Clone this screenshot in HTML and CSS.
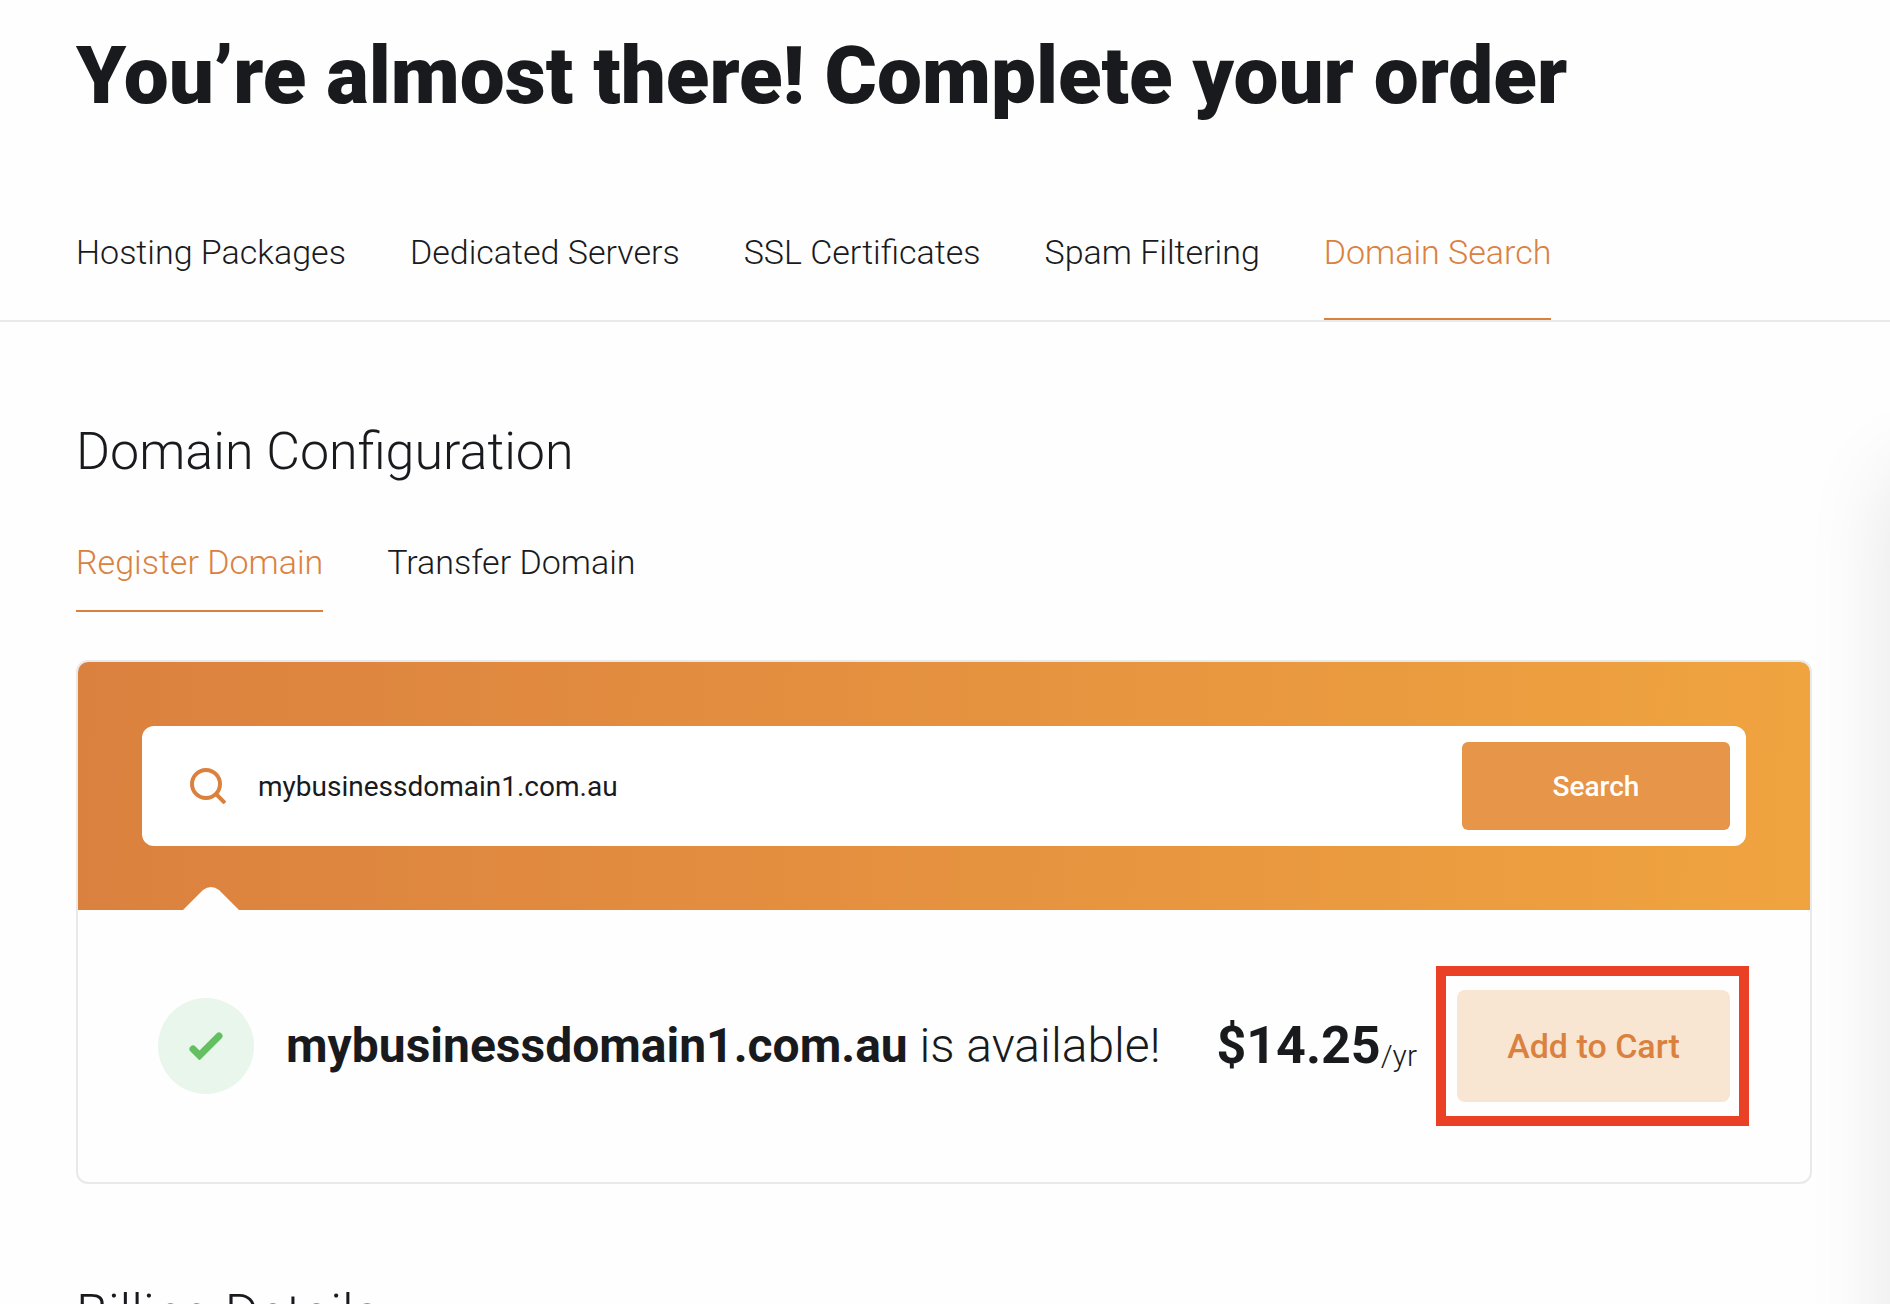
FILE: index.html
```html
<!DOCTYPE html>
<html lang="en">

<head>
    <meta charset="UTF-8">
    <meta name="viewport" content="width=device-width, initial-scale=1.0">
    <title>Complete your order</title>
    <link rel="stylesheet" href="styles.css">
</head>

<body>
    <header class="page-header">
        <h1>You’re almost there! Complete your order</h1>
        <nav class="tabs main-tabs">
            <a href="#hosting">Hosting Packages</a>
            <a href="#servers">Dedicated Servers</a>
            <a href="#ssl">SSL Certificates</a>
            <a href="#spam">Spam Filtering</a>
            <a href="#domain" class="active">Domain Search</a>
        </nav>
    </header>
    <div class="layout">
        <main class="content">
            <section id="domain">
                <h2>Domain Configuration</h2>
                <nav class="tabs sub-tabs">
                    <a href="#register" class="active">Register Domain</a>
                    <a href="#transfer">Transfer Domain</a>
                </nav>
                <div class="domain-card">
                    <div class="search-area">
                        <form class="search-box">
                            <label for="domain-name" aria-label="Domain name">
                                <svg class="search-icon" viewBox="0 0 36 36" width="36" height="36">
                                    <circle cx="16" cy="16" r="14" />
                                    <path d="M26 26l9 9" />
                                </svg>
                            </label>
                            <input type="text" id="domain-name" name="domain" value="mybusinessdomain1.com.au">
                            <button type="submit" class="search-button">Search</button>
                        </form>
                        <!-- pointer from the result up to the search box -->
                        <svg class="notch" viewBox="0 0 56 24" width="56" height="24">
                            <path d="M0 24L20 4Q28 -2 36 4L56 24Z" />
                        </svg>
                    </div>
                    <div class="result">
                        <span class="status">
                            <svg viewBox="0 0 34 28" width="34" height="28">
                                <path d="M4 17l6.500 6.500L30 4" />
                            </svg>
                        </span>
                        <p class="message"><strong>mybusinessdomain1.com.au</strong> is available!</p>
                        <p class="price"><strong>$14.25</strong><span>/yr</span></p>
                        <div class="highlight">
                            <button type="button" class="cart-button">Add to Cart</button>
                        </div>
                    </div>
                </div>
            </section>
            <section class="billing">
                <h2>Billing Details</h2>
            </section>
        </main>
        <aside class="summary"></aside>
    </div>
</body>

</html>
```
FILE: styles.css
```css
* {
    box-sizing: border-box;
}

body {
    margin: 0;
    font-family: Roboto, Arial, sans-serif;
    font-weight: 300;
    color: #191a1d;
    background-color: #fefefe;
}

h1,
h2,
p {
    margin: 0;
}

h1 {
    font-size: 80px;
    line-height: 96px;
    font-weight: 900;
}

h2 {
    font-size: 52px;
    line-height: 64px;
    font-weight: 300;
}

button,
input {
    font-family: inherit;
    border: none;
}

button {
    font-weight: 500;
    cursor: pointer;
}

.page-header {
    padding: 28px 78px 0 76px;
    border-bottom: 2px solid #e9e9e9;
}

.tabs {
    display: flex;
    gap: 64px;
    font-size: 34px;
    line-height: 40px;
}

.tabs a {
    color: inherit;
    text-decoration: none;
    border-bottom: 2px solid transparent;
}

.tabs a.active {
    color: #db813f;
    border-color: #db813f;
}

.main-tabs {
    margin-top: 108px;
}

.main-tabs a {
    padding-bottom: 46px;
}

.sub-tabs {
    margin-top: 58px;
}

.sub-tabs a {
    padding-bottom: 28px;
}

.layout {
    display: flex;
    overflow: hidden;
}

.content {
    flex: 0 0 100%;
    padding: 98px 78px 64px 76px;
}

.domain-card {
    margin-top: 48px;
    border: 2px solid #e9e9e9;
    border-radius: 12px;
    overflow: hidden;
}

.search-area {
    position: relative;
    padding: 64px;
    background: linear-gradient(92deg, #db813f, #e38e3f 40%, #f0a43f);
}

.search-box {
    display: flex;
    align-items: center;
    gap: 32px;
    padding: 16px 16px 16px 48px;
    border-radius: 12px;
    background-color: #fff;
}

.search-box label {
    display: flex;
}

.search-icon {
    fill: none;
    stroke: #db813f;
    stroke-width: 4;
}

.search-box input {
    flex: 1;
    min-width: 0;
    padding: 0;
    font-size: 28px;
    color: inherit;
    background: none;
    outline: none;
}

.search-button {
    width: 268px;
    height: 88px;
    border-radius: 6px;
    font-size: 28px;
    color: #fff;
    background-color: #e79548;
}

.notch {
    position: absolute;
    left: 105px;
    bottom: 0;
    fill: #fefefe;
}

.result {
    display: flex;
    align-items: center;
    padding: 56px 61px 56px 80px;
}

.status {
    display: flex;
    align-items: center;
    justify-content: center;
    width: 96px;
    height: 96px;
    border-radius: 50%;
    background-color: #e9f6ec;
}

.status path {
    fill: none;
    stroke: #64be62;
    stroke-width: 7;
    stroke-linecap: round;
}

.message {
    margin-left: 32px;
    font-size: 48px;
    line-height: 56px;
}

.message strong,
.price strong {
    font-weight: 700;
}

.price {
    display: flex;
    align-items: flex-end;
    margin-left: auto;
    font-size: 52px;
    line-height: 60px;
}

.price span {
    font-size: 30px;
    line-height: 40px;
}

/* frame round the call to action */
.highlight {
    margin-left: 19px;
    padding: 14px 9px 14px 11px;
    border: 10px solid #ea4025;
}

.cart-button {
    display: block;
    width: 273px;
    height: 112px;
    border-radius: 8px;
    font-size: 34px;
    color: #db813f;
    background-color: #f9e6d2;
}

.billing {
    margin-top: 98px;
}

.summary {
    flex: 0 0 600px;
    margin-top: 101px;
    box-shadow: 0 50px 80px rgba(0, 0, 0, 0.1);
}
```
